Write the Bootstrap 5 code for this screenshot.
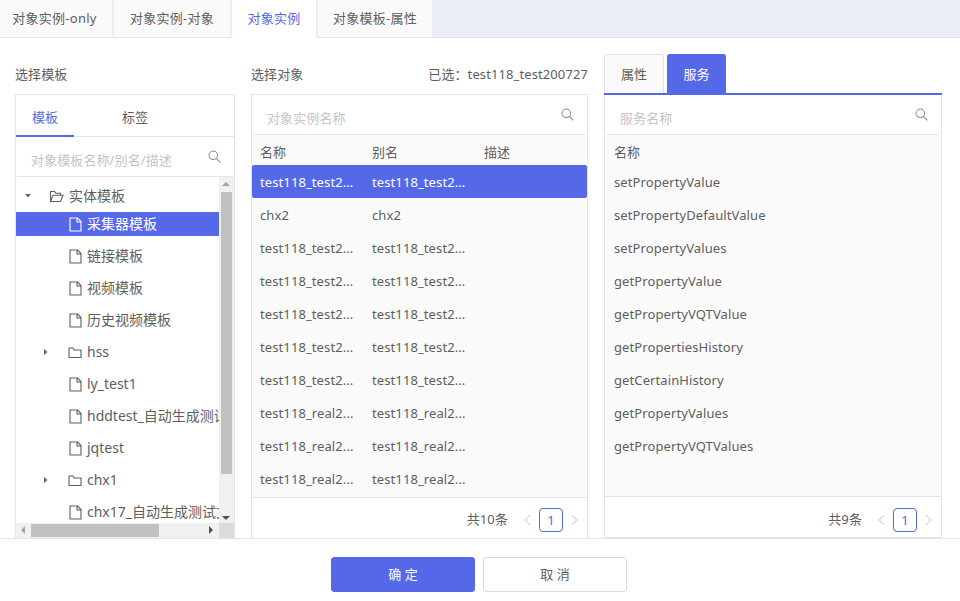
<!DOCTYPE html>
<html lang="zh"><head><meta charset="utf-8">
<link href="https://cdn.jsdelivr.net/npm/bootstrap@5.3.0/dist/css/bootstrap.min.css" rel="stylesheet">
<style>
html,body{height:100%;overflow:hidden;margin:0}
body{font-family:"Noto Sans","Noto Sans CJK SC",sans-serif;font-size:13px;letter-spacing:.1px;color:#5e5e5e;background:#fff}
.shell{height:601px}
.topbar{height:38px;background:#e9edf6;border-bottom:1px solid #e4e4e4;flex:none}
.toptab{height:37px;background:#fafafa;margin-right:2px;line-height:37px;text-align:center;color:#5e5e5e;text-decoration:none;letter-spacing:.25px}
.toptab.on{background:#fff;color:#5569e8;height:38px}
.t1{width:112px;padding-right:3px}.t2{width:116px}.t3{width:84px}.t4{width:114px}
.cols{flex:1 1 auto;min-height:0;padding:16px 18px 0 15px;gap:16px}
.c-a{width:220px}.c-b{width:337px}.c-c{width:338px}
.cap{height:40px;line-height:40px;flex:none}
.tcc{font-family:"Noto Sans CJK TC",sans-serif}
.box{border:1px solid #e4e4e4;border-bottom:0;flex:1 1 auto;min-height:0;background:#fff}
.c-c .box{border-top:0;border-bottom:1px solid #e4e4e4}
.inner-tabs{height:42px;border-bottom:1px solid #e4e4e4;flex:none}
.itab{width:58px;text-align:center;line-height:44px;height:42px;color:#5e5e5e}
.itab.on{color:#5569e8;border-bottom:2px solid #5569e8}
.itab.gap{width:92px;margin-left:15px}
.srch{height:40px;flex:none;margin:0 2px;border-bottom:1px solid #e4e4e4;padding:0 11px 0 13px}
.srch span{color:#c4c4c4;padding-top:9px}
.s-a{margin:0 1px;padding:0 12px 0 14px}
.tree-wrap{flex:1 1 auto;min-height:0;position:relative}
.tree{padding-top:7px;width:203px;overflow:hidden;height:346px;flex:none;white-space:nowrap;font-size:14px;letter-spacing:0}
.tr{height:24px;margin-bottom:8px;line-height:24px;display:flex;align-items:center}
.tr.head{margin-bottom:4px}
.tr.sel{background:#5569e8;color:#fff}
.tw{flex:none;display:flex}
.tw.open{width:30px;padding-left:9px}
.tw.shut{width:34px;padding-left:28px}
.ico{width:15px;flex:none;margin-right:4px;display:flex;justify-content:center}
.in1{padding-left:52px}
.ico.fo{margin-left:2px;margin-right:4px;width:17px}
.ico.fc{margin-left:17px;margin-right:5px}
.vbar{width:15px;background:#f1f1f1;height:346px;flex:none;position:relative}
.vthumb{position:absolute;left:2px;top:15px;width:11px;height:282px;background:#c1c1c1}
.hbar{height:15px;background:#f1f1f1;flex:none;position:relative}
.hthumb{position:absolute;left:15px;top:1px;width:128px;height:13px;background:#c1c1c1}
.corner{position:absolute;right:0;top:0;width:15px;height:15px;background:#dcdcdc}
.arr{position:absolute;width:0;height:0;border-style:solid;border-color:transparent}
.au{left:3px;top:5px;border-width:0 4px 4px;border-bottom-color:#a3a3a3}
.ad{left:3px;bottom:3px;border-width:4px 4px 0;border-top-color:#505050}
.al{left:5px;top:3px;border-width:4px 4px 4px 0;border-right-color:#a3a3a3}
.ar{right:21px;top:3px;border-width:4px 0 4px 4px;border-left-color:#505050}
.thd{height:30px;background:#fafafa;line-height:35px;flex:none;padding-left:8px}
.tbd{flex:1 1 auto;min-height:0;background:#fafafa}
.rw{height:33px;line-height:34px;padding-left:8px;white-space:nowrap}
.rw.sel{background:#5569e8;color:#fff;border-radius:2px}
.cell{width:112px;flex:none}
.pgr{height:41px;border-top:1px solid #e4e4e4;flex:none;padding:4px 5px 0 0;background:#fff}
.c-c .pgr{padding-top:5px}
.pg-now{width:24px;height:24px;border:1px solid #5569e8;border-radius:4px;color:#5569e8;text-align:center;line-height:22px;font-size:13px;margin:0 5px}
.pg-count{margin-right:12px}
.side-tabs{height:41px;flex:none;border-bottom:2px solid #5569e8}
.stab{height:39px;width:60px;border:1px solid #e4e4e4;border-bottom:0;border-radius:3px 3px 0 0;background:#fafafa;text-align:center;line-height:39px;margin-right:3px}
.stab.on{width:59px;background:#5569e8;border-color:#5569e8;color:#fff}
.c-c .box .thd,.c-c .box .rw{padding-left:9px}
.foot{height:63px;flex:none;border-top:1px solid #e4e4e4;padding:18px 2px 0 0;background:#fff;gap:8px;position:relative;z-index:2}
.fbtn{width:144px;height:35px;border-radius:3px;font-size:13px;padding:0;line-height:33px}
.fbtn.go{background:#5569e8;border:1px solid #5569e8;color:#fff}
.fbtn.no{background:#fff;border:1px solid #dcdcdc;color:#5e5e5e}
</style></head>
<body>
<svg width="0" height="0" class="position-absolute"><defs>
<symbol id="i-file" viewBox="0 0 13 15"><path d="M1 1h7.5L12 4.5V14H1zM8 1v4h4" fill="none" stroke="currentColor" stroke-width="1.1"/></symbol>
<symbol id="i-fc" viewBox="0 0 14 13"><path d="M1 2h4l1.3 2H13v7.5H1z" fill="none" stroke="currentColor" stroke-width="1.1"/></symbol>
<symbol id="i-fo" viewBox="0 0 15 13"><path d="M1.5 11.5V1.5h4l1.3 1.7h4.7V5M1.5 11.5h10L14 5.2H4z" fill="none" stroke="currentColor" stroke-width="1.1"/></symbol>
<symbol id="i-s" viewBox="0 0 14 14"><circle cx="5.7" cy="5.7" r="4.6" fill="none" stroke="currentColor" stroke-width="1.1"/><path d="M9 9l4.3 4.3" stroke="currentColor" stroke-width="1.2"/></symbol>
</defs></svg>
<div class="shell d-flex flex-column">
 <nav class="topbar d-flex">
  <a class="toptab t1">对象实例-only</a><a class="toptab t2">对象实例-对象</a><a class="toptab t3 on">对象实例</a><a class="toptab t4">对象模板-属性</a>
 </nav>
 <main class="cols d-flex">
  <section class="c-a d-flex flex-column">
   <div class="cap">选择模板</div>
   <div class="box d-flex flex-column">
    <div class="inner-tabs d-flex"><div class="itab on">模板</div><div class="itab gap">标签</div></div>
    <div class="s-a srch d-flex justify-content-between align-items-center"><span>对象模板名称/别名/描述</span><svg width="13" height="13" color="#8c8c8c"><use href="#i-s"/></svg></div>
    <div class="tree-wrap d-flex flex-column">
     <div class="d-flex flex-grow-1">
      <div class="tree">
       <div class="tr head"><span class="tw open"><svg width="6" height="4"><path d="M0 0h6L3 3.5z" fill="#666"/></svg></span><span class="ico fo"><svg width="15" height="13"><use href="#i-fo"/></svg></span>实体模板</div>
       <div class="tr sel in1"><span class="ico"><svg width="13" height="15"><use href="#i-file"/></svg></span>采集器模板</div>
       <div class="tr in1"><span class="ico"><svg width="13" height="15"><use href="#i-file"/></svg></span>链接模板</div>
       <div class="tr in1"><span class="ico"><svg width="13" height="15"><use href="#i-file"/></svg></span>视频模板</div>
       <div class="tr in1"><span class="ico"><svg width="13" height="15"><use href="#i-file"/></svg></span>历史视频模板</div>
       <div class="tr"><span class="tw shut"><svg width="4" height="6"><path d="M0 0l3.5 3L0 6z" fill="#666"/></svg></span><span class="ico fc"><svg width="14" height="13"><use href="#i-fc"/></svg></span>hss</div>
       <div class="tr in1"><span class="ico"><svg width="13" height="15"><use href="#i-file"/></svg></span>ly_test1</div>
       <div class="tr in1"><span class="ico"><svg width="13" height="15"><use href="#i-file"/></svg></span>hddtest_自动生成测试文件</div>
       <div class="tr in1"><span class="ico"><svg width="13" height="15"><use href="#i-file"/></svg></span>jqtest</div>
       <div class="tr"><span class="tw shut"><svg width="4" height="6"><path d="M0 0l3.5 3L0 6z" fill="#666"/></svg></span><span class="ico fc"><svg width="14" height="13"><use href="#i-fc"/></svg></span>chx1</div>
       <div class="tr in1"><span class="ico"><svg width="13" height="15"><use href="#i-file"/></svg></span>chx17_自动生成测试文件</div>
      </div>
      <div class="vbar"><i class="arr au"></i><div class="vthumb"></div><i class="arr ad"></i></div>
     </div>
     <div class="hbar"><i class="arr al"></i><div class="hthumb"></div><i class="arr ar"></i><div class="corner"></div></div>
    </div>
   </div>
  </section>
  <section class="c-b d-flex flex-column">
   <div class="cap d-flex justify-content-between"><span>选择对象</span><span>已选<span class="tcc">：</span>test118_test200727</span></div>
   <div class="box d-flex flex-column">
    <div class="srch d-flex justify-content-between align-items-center"><span>对象实例名称</span><svg width="13" height="13" color="#8c8c8c"><use href="#i-s"/></svg></div>
    <div class="thd d-flex"><div class="cell">名称</div><div class="cell">别名</div><div class="cell">描述</div></div>
    <div class="tbd">
     <div class="rw sel d-flex"><div class="cell">test118_test2...</div><div class="cell">test118_test2...</div></div>
     <div class="rw d-flex"><div class="cell">chx2</div><div class="cell">chx2</div></div>
     <div class="rw d-flex"><div class="cell">test118_test2...</div><div class="cell">test118_test2...</div></div>
     <div class="rw d-flex"><div class="cell">test118_test2...</div><div class="cell">test118_test2...</div></div>
     <div class="rw d-flex"><div class="cell">test118_test2...</div><div class="cell">test118_test2...</div></div>
     <div class="rw d-flex"><div class="cell">test118_test2...</div><div class="cell">test118_test2...</div></div>
     <div class="rw d-flex"><div class="cell">test118_test2...</div><div class="cell">test118_test2...</div></div>
     <div class="rw d-flex"><div class="cell">test118_real2...</div><div class="cell">test118_real2...</div></div>
     <div class="rw d-flex"><div class="cell">test118_real2...</div><div class="cell">test118_real2...</div></div>
     <div class="rw d-flex"><div class="cell">test118_real2...</div><div class="cell">test118_real2...</div></div>
    </div>
    <div class="pgr d-flex justify-content-end align-items-center">
     <span class="pg-count">共10条</span>
     <svg width="14" height="14"><path d="M10 2.5L5 7l5 4.5" fill="none" stroke="#c4c4c4" stroke-width="1"/></svg>
     <span class="pg-now">1</span>
     <svg width="14" height="14"><path d="M4 2.5L9 7l-5 4.5" fill="none" stroke="#c4c4c4" stroke-width="1"/></svg>
    </div>
   </div>
  </section>
  <section class="c-c d-flex flex-column">
   <div class="side-tabs d-flex align-items-start"><div class="stab">属性</div><div class="stab on">服务</div></div>
   <div class="box d-flex flex-column">
    <div class="srch d-flex justify-content-between align-items-center"><span>服务名称</span><svg width="13" height="13" color="#8c8c8c"><use href="#i-s"/></svg></div>
    <div class="thd d-flex"><div class="cell">名称</div></div>
    <div class="tbd">
     <div class="rw">setPropertyValue</div><div class="rw">setPropertyDefaultValue</div><div class="rw">setPropertyValues</div><div class="rw">getPropertyValue</div><div class="rw">getPropertyVQTValue</div><div class="rw">getPropertiesHistory</div><div class="rw">getCertainHistory</div><div class="rw">getPropertyValues</div><div class="rw">getPropertyVQTValues</div>
    </div>
    <div class="pgr d-flex justify-content-end align-items-center">
     <span class="pg-count">共9条</span>
     <svg width="14" height="14"><path d="M10 2.5L5 7l5 4.5" fill="none" stroke="#c4c4c4" stroke-width="1"/></svg>
     <span class="pg-now">1</span>
     <svg width="14" height="14"><path d="M4 2.5L9 7l-5 4.5" fill="none" stroke="#c4c4c4" stroke-width="1"/></svg>
    </div>
   </div>
  </section>
 </main>
 <footer class="foot d-flex justify-content-center">
  <button type="button" class="btn fbtn go">确 定</button>
  <button type="button" class="btn fbtn no">取 消</button>
 </footer>
</div>
<script src="https://cdn.jsdelivr.net/npm/bootstrap@5.3.0/dist/js/bootstrap.bundle.min.js"></script>
</body></html>
